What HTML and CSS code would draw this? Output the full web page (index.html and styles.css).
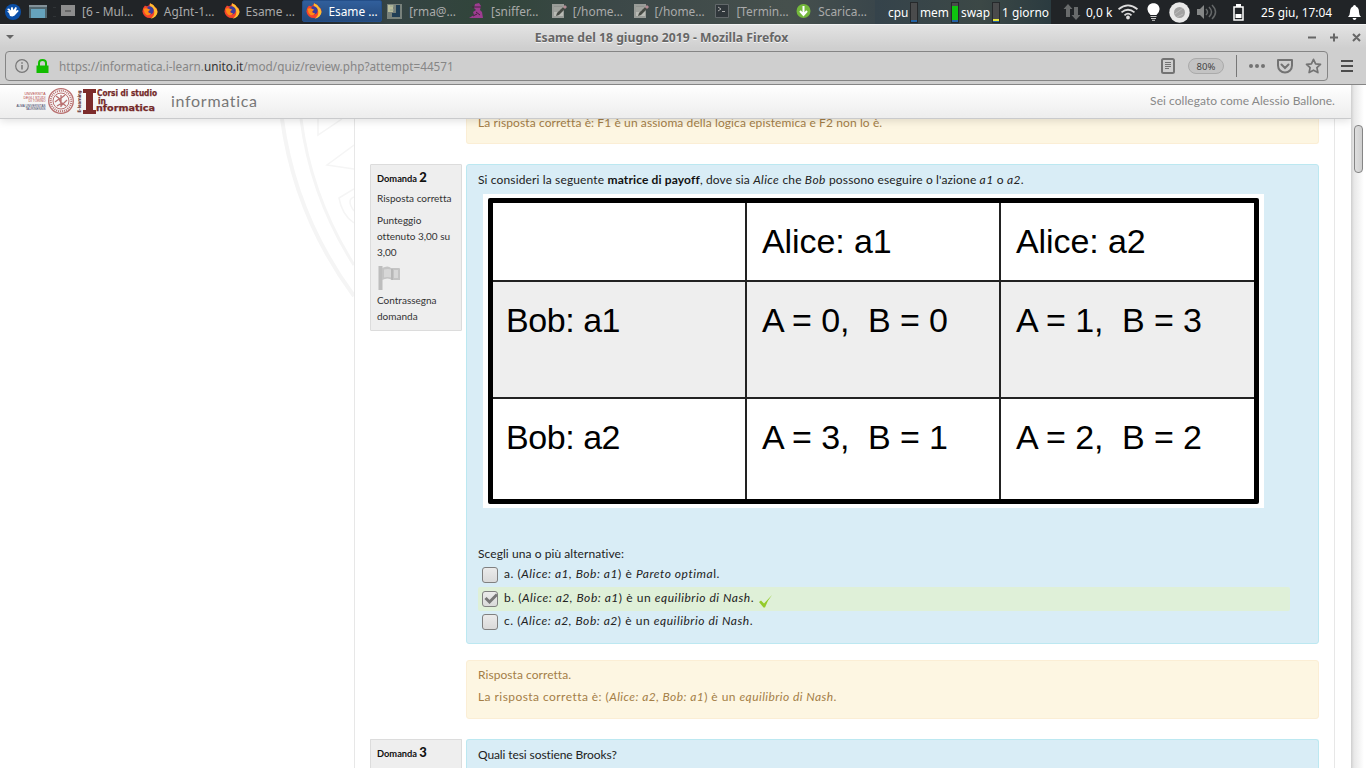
FILE: index.html
```html
<!DOCTYPE html>
<html lang="it">
<head>
<meta charset="utf-8">
<title>Esame del 18 giugno 2019</title>
<link rel="stylesheet" href="styles.css">
</head>
<body>
<svg class="defs" width="0" height="0">
  <defs>
    <symbol id="fox" viewBox="0 0 16 16">
      <path d="M3 2.500Q4 3.500 6 3Q8 2 8 .300Q11.500 1.500 13 4.200Q15.300 5 15.500 8.500A7.600 7.400 0 0 1 .400 8.500Q.300 5 3 2.500z" fill="#f5432b"/>
      <path d="M8 .300Q12 2 13 4.200Q15.500 6 15.500 9A7.600 7 0 0 1 8.500 15.700Q12.500 13 12.300 9Q11.500 5 8.500 3.500Q7.300 2 8 .300z" fill="#ffbd2f"/>
      <path d="M5.500 3.500Q9 2.500 11 5Q12.500 8 10.500 10.500Q7.500 12.500 5 10.500L7.500 9.500Q5.500 8.500 5.500 6.500z" fill="#3b3c9e"/>
      <path d="M1.500 6Q3.500 4.500 6 5.800L8.300 6.800L6.300 8.200Q5.500 10.500 9 10Q8 13 4.500 12Q2 10 1.500 6z" fill="#ff8a16"/>
    </symbol>
    <symbol id="pad" viewBox="0 0 16 16">
      <path d="M1 1h12v14H1z" fill="#999c98"/><path d="M3 4h9v9H3z" fill="#b9bbb5"/><path d="M3 4h8M3 6h7M3 8h5" stroke="#858884"/>
      <path d="M5 13l1-3L12 4l2 2-6 6z" fill="#464a44"/><path d="M12 4l2-2 2 2-2 2z" fill="#b18a91"/>
    </symbol>
  </defs>
</svg>

<header class="panel">
  <div class="launchers">
    <svg width="16" height="16" viewBox="0 0 16 16"><circle cx="8" cy="8" r="8" fill="#0a4fa8"/><path d="M2 5l2-.5 2 2 0-3 1.500-.5 1 3 2-3 1.400.7-1 3 2-.7.8 1-2.700 3Q9 13.500 5 12L4 9 2 7.500 4 7z" fill="#fff"/></svg>
    <svg class="desk" width="20" height="16" viewBox="0 0 20 16"><path d="M1 2h18v12h-3v-3H4v3H1z" fill="#51666e"/><path d="M3 5h14v9H3z" fill="#66a3bd"/><path d="M1 2h18" stroke="#839199" stroke-width="2"/></svg>
    <span class="grip"></span>
  </div>
  <nav class="tasks">
    <span class="task"><svg viewBox="0 0 16 16"><path d="M1 2h14v11H1z" fill="#8d8d8d"/><path d="M5 7h6v2H5z" fill="#666"/></svg>[6 - Mul…</span>
    <span class="task"><svg viewBox="0 0 16 16"><use href="#fox"/></svg>AgInt-1…</span>
    <span class="task"><svg viewBox="0 0 16 16"><use href="#fox"/></svg>Esame …</span>
    <span class="task active"><svg viewBox="0 0 16 16"><use href="#fox"/></svg>Esame …</span>
    <span class="task"><svg viewBox="0 0 16 16"><path d="M0 1h15v15H0z" fill="#78817b"/><path d="M1 2h5v7H1z" fill="#b9bd9c"/><path d="M11 2v10H5" stroke="#203e56" stroke-width="4" fill="none"/><path d="M3 3h4M3 7h4" stroke="#96a38f"/></svg>[rma@…</span>
    <span class="task"><svg viewBox="0 0 16 16"><path d="M6 1l4-1 2 3-1 4 2 2 1 6H0l5-3-1-3 3-2-2-2z" fill="#9c3c90"/><path d="M3 4h9M7 9l4 3M4 13l4-2" stroke="#42233e"/></svg>[sniffer…</span>
    <span class="task"><svg viewBox="0 0 16 16"><use href="#pad"/></svg>[/home…</span>
    <span class="task"><svg viewBox="0 0 16 16"><use href="#pad"/></svg>[/home…</span>
    <span class="task"><svg viewBox="0 0 16 16"><path d="M1.500 1.500h13v13h-13z" fill="#30373b" stroke="#62686a"/><path d="M4 4l3 2-3 2M8 8.500h3" stroke="#aaa" fill="none"/></svg>[Termin…</span>
    <span class="task"><svg viewBox="0 0 16 16"><circle cx="7.500" cy="8" r="7" fill="#74b83b"/><path d="M7.500 3v8M4 8l3.500 4L11 8" stroke="#fff" stroke-width="2" fill="none"/></svg>Scarica…</span>
  </nav>
  <div class="load">
    <span class="w32">cpu</span><i class="meter cpu"></i>
    <span class="w32">mem</span><i class="meter mem"></i>
    <span class="w32">swap</span><i class="meter swap"></i>
    <span class="up">1 giorno</span>
  </div>
  <div class="tray">
    <svg class="net" width="18" height="16" viewBox="0 0 18 16"><path d="M5 0l4.500 5H7v8H3V5H.5zM13 16l-4.500-5H11V3h4v8h2.500z" fill="#686a6b"/></svg>
    <span class="rate">0,0 k</span>
    <svg class="wifi" width="20" height="16" viewBox="0 0 20 16" fill="none" stroke="#ddd" stroke-width="1.800"><path d="M.500 5.200Q10-2.500 19.500 5.200"/><path d="M3.500 8.400Q10 3 16.500 8.400M6.500 11.300Q10 8 13.500 11.300"/><circle cx="10" cy="13.500" r="1" fill="#fff"/></svg>
    <svg class="bulb" width="13" height="18" viewBox="0 0 13 18"><path d="M3.500 12Q0 8.500 .500 5.500C1-1.500 12-1.500 12.500 5.500Q13 8.500 9.500 12z" fill="#fff"/><path d="M3.500 13.500h6M4 15.500h5M5 17.300h3" stroke="#ccc"/></svg>
    <svg class="disc" width="21" height="21" viewBox="0 0 21 21"><circle cx="10.500" cy="10.500" r="10.200" fill="#e9e9e9"/><circle cx="10.500" cy="10.500" r="5.500" fill="#a3a3a3"/><path d="M6 12l8-6M8 15l6-3" stroke="#bbb"/></svg>
    <svg class="snd" width="20" height="16" viewBox="0 0 20 16"><path d="M0 5h3l4-4v14l-4-4H0z" fill="#858787"/><path d="M9 5q3 3 0 6M12 3q5 5 0 10M15 1q7 7 0 14" stroke="#656869" stroke-width="1.500" fill="none"/></svg>
    <svg class="bat" width="11" height="17" viewBox="0 0 11 17"><path d="M1 3h9v13H1z" fill="none" stroke="#fff" stroke-width="1.500"/><path d="M2.500 10h6v4h-6zM3 0h5v3H3z" fill="#fff"/></svg>
    <span class="clock">25 giu, 17:04</span>
    <svg class="bell" width="13" height="15" viewBox="0 0 13 15"><path d="M6.500 0Q8 0 8 1.500Q11 2.500 11 7Q11 10 13 12H0Q2 10 2 7Q2 2.500 5 1.500Q5 0 6.500 0zM4.500 13h4Q8 15 6.500 15T4.500 13z" fill="#fff"/></svg>
  </div>
</header>

<div class="titlebar">
  <svg class="menu" width="8" height="4" viewBox="0 0 8 4"><path d="M0 0h8L4 4z" fill="#666"/></svg>
  <b>Esame del 18 giugno 2019 - Mozilla Firefox</b>
  <svg class="wm" width="53" height="9" viewBox="0 0 53 9" stroke="#666" stroke-width="2" fill="none"><path d="M0 4.500h8M22 4.500h8M26 .500v8M45 1l7 7M52 1l-7 7"/></svg>
</div>

<div class="toolbar">
  <div class="urlbar">
    <svg width="14" height="14" viewBox="0 0 14 14" fill="none" stroke="#777"><circle cx="7" cy="7" r="6.300" stroke-width="1.200"/><path d="M7 6v4.500M7 3.300v1.400" stroke-width="1.500"/></svg>
    <svg class="lock" width="13" height="14" viewBox="0 0 13 14"><path d="M.5 6.500h12V14H.5z" fill="#12bc00"/><path d="M3 7V4Q3 1 6.500 1T10 4v3" fill="none" stroke="#12bc00" stroke-width="2"/></svg>
    <span class="url">https://informatica.i-learn.<em>unito.it</em>/mod/quiz/review.php?attempt=44571</span>
    <svg class="reader" width="14" height="16" viewBox="0 0 14 16" fill="none" stroke="#737373"><rect x="1" y="1" width="12" height="14" rx="1.500" stroke-width="2"/><path d="M4 4.500h6M4 6.500h6M4 8.500h6M4 10.500h4"/></svg>
    <span class="zoom">80%</span>
    <span class="bar"></span>
    <svg class="dots" width="16" height="4" viewBox="0 0 16 4" fill="#737373"><circle cx="2" cy="2" r="2"/><circle cx="8" cy="2" r="2"/><circle cx="14" cy="2" r="2"/></svg>
    <svg class="pocket" width="16" height="15" viewBox="0 0 16 15" fill="none" stroke="#737373" stroke-width="2"><path d="M1 1h14v5.500a7 7 0 0 1-14 0z" stroke-linejoin="round"/><path d="M4.500 5.500L8 9l3.500-3.500" stroke-linecap="round"/></svg>
    <svg class="star" width="17" height="16" viewBox="0 0 17 16"><path d="M8.500 1.300l2.100 4.500 4.900.6-3.600 3.300 1 4.900-4.400-2.400-4.400 2.400 1-4.900-3.600-3.300 4.900-.6z" fill="none" stroke="#737373" stroke-width="1.700" stroke-linejoin="round"/></svg>
  </div>
  <svg class="burger" width="12" height="12" viewBox="0 0 12 12"><path d="M0 1h12M0 6h12M0 11h12" stroke="#4c4c4c" stroke-width="2"/></svg>
</div>

<div class="view">
  <div class="page">
    <div class="navbar">
      <svg class="logo" width="143" height="28" viewBox="0 0 143 28">
        <g class="tiny red" text-anchor="end"><text x="29.500" y="7.500" textLength="21" lengthAdjust="spacingAndGlyphs">UNIVERSITÀ</text><text x="29.500" y="11.500" textLength="22" lengthAdjust="spacingAndGlyphs">DEGLI STUDI</text><text x="29.500" y="15" textLength="17" lengthAdjust="spacingAndGlyphs">DI TORINO</text></g>
        <g class="tiny navy" text-anchor="end"><text x="29.500" y="19.500" textLength="29" lengthAdjust="spacingAndGlyphs">ALMA UNIVERSITAS</text><text x="29.500" y="23" textLength="20" lengthAdjust="spacingAndGlyphs">TAURINENSIS</text></g>
        <g fill="none" stroke="#b97070"><circle cx="45" cy="14" r="12.300" stroke-width="1.300"/><circle cx="45" cy="14" r="10.300" stroke-width="2" stroke-dasharray="1 1"/><circle cx="45" cy="14" r="8" stroke-width="1"/><path d="M40 9l4 3 5-4M39 15l4-3 3 6 5-5M41 19l5-3 4 3M45 8v12" stroke-width="1.300"/></g>
        <text class="side" transform="translate(65 25.500) rotate(-90)" textLength="22" lengthAdjust="spacingAndGlyphs">E-learning</text>
        <path d="M67 2h13v4h-3v17h3v4H67v-4h3V6h-3z" fill="#7c2b2b"/>
        <g class="course"><text x="81" y="9" textLength="60" lengthAdjust="spacingAndGlyphs">Corsi di studio</text><text x="82" y="16.500" textLength="8" lengthAdjust="spacingAndGlyphs">in</text><text x="80" y="24" textLength="59" lengthAdjust="spacingAndGlyphs">nformatica</text></g>
      </svg>
      <span class="brand">informatica</span>
      <span class="login">Sei collegato come Alessio Ballone.</span>
    </div>
    <div class="body">
      <aside class="gutter">
        <svg width="354" height="649" viewBox="0 119 354 649" fill="none" stroke="#f5f5f5">
          <path d="M282 119Q295 216 354 296" stroke-width="4"/><path d="M301 119Q311 197 354 265" stroke-width="3"/>
          <path d="M318 119v16l24-16M354 145l-27 20 27 4M354 189l-15 9q3 17 15 25M354 197q-8 3 0 14" stroke-width="1.500"/>
        </svg>
      </aside>
      <main class="main">
        <div class="feedback cut">La risposta corretta è: F1 è un assioma della logica epistemica e F2 non lo è.</div>

        <section class="question">
          <div class="info">
            <h3>Domanda <b>2</b></h3>
            <p>Risposta corretta</p>
            <p class="grade">Punteggio<br>ottenuto 3,00 su<br>3,00</p>
            <svg class="flag" width="24" height="26" viewBox="0 0 24 26"><path d="M1.500 1h4v24h-4z" fill="#bdbdbd"/><path d="M5 3q6-3 9 0h8q1 0 1 1v11h-8q-4-3-10 0z" fill="#c4c4c4"/><path d="M7 4.500q4-1 7 0v8q-4-1-7 0zM17 5v8h4V5z" fill="#d7d7d7"/><path d="M15 4v11" stroke="#aaa"/></svg>
            <p class="mark">Contrassegna<br>domanda</p>
          </div>
          <div class="content">
            <p class="stem">Si consideri la seguente <b>matrice di payoff</b>, dove sia <i>Alice</i> che <i>Bob</i> possono eseguire o l'azione <i>a1</i> o <i>a2</i>.</p>
            <div class="figure">
              <div class="matrix">
                <span></span><span>Alice: a1</span><span>Alice: a2</span>
                <span class="g">Bob: a1</span><span class="g">A = 0,&nbsp; B = 0</span><span class="g">A = 1,&nbsp; B = 3</span>
                <span>Bob: a2</span><span>A = 3,&nbsp; B = 1</span><span>A = 2,&nbsp; B = 2</span>
              </div>
            </div>
            <p class="prompt">Scegli una o più alternative:</p>
            <div class="answer"><i class="box"></i><span class="text">a. (<i>Alice: a1, Bob: a1</i>) è <i>Pareto optima</i>l.</span></div>
            <div class="answer correct"><span class="box"><svg width="14" height="14" viewBox="0 0 14 14"><path d="M2.500 6l4 4L14 2.500" fill="none" stroke="#777" stroke-width="3"/></svg></span><span class="text">b. (<i>Alice: a2, Bob: a1</i>) è un <i>equilibrio di Nash</i>.</span><svg class="tick" width="13" height="13" viewBox="0 0 13 13"><path d="M0 7l2-1.500 3 3L13 0Q8 6 6 12.500H4.500z" fill="#95cb2b"/></svg></div>
            <div class="answer"><i class="box"></i><span class="text">c. (<i>Alice: a2, Bob: a2</i>) è un <i>equilibrio di Nash</i>.</span></div>
          </div>
        </section>

        <div class="feedback full"><p class="fa">Risposta corretta.</p><p class="fb">La risposta corretta è: (<i>Alice: a2, Bob: a1</i>) è un <i>equilibrio di Nash</i>.</p></div>

        <section class="question next">
          <div class="info"><h3>Domanda <b>3</b></h3></div>
          <div class="content"><p class="stem three">Quali tesi sostiene Brooks?</p></div>
        </section>
      </main>
    </div>
  </div>
  <div class="scroll"><i></i></div>
</div>
</body>
</html>
```
FILE: styles.css
```css
* { box-sizing: border-box; }
body { margin: 0; width: 1366px; height: 768px; overflow: hidden; background: #fff; font-family: "Noto Sans", sans-serif; display: flex; flex-direction: column; }
p, h3 { margin: 0; }
svg { display: block; flex: none; }
.defs { position: absolute; }

/* desktop panel */
.panel { height: 24px; flex: none; display: flex; align-items: center; background: #212427; font-size: 11.900px; color: #fff; line-height: 24px; white-space: nowrap; }
.launchers { width: 57px; padding-left: 5px; display: flex; align-items: center; }
.desk { margin-left: 7px; }
.grip { width: 3px; height: 10px; margin-left: 5px; border: solid #303437; border-width: 1px 0; }
.tasks { display: flex; width: 818px; height: 24px; background: linear-gradient(90deg, transparent 257px, #354344 330px, #31453a 430px, #3c4848 560px, #46504d 730px, #3a464b); }
.task { width: 81.8px; height: 22px; padding-left: 3px; display: flex; align-items: center; gap: 6px; color: #aaa; }
.task svg { width: 16px; height: 16px; }
.task.active { background: linear-gradient(#315f9c, #24497b); border: 1px solid #244e88; color: #fff; width: 80px; margin-right: 1.800px; border-radius: 2px; }
.load { width: 176px; height: 24px; padding-left: 13px; background: linear-gradient(90deg, #35434b, #3c4846 60%, #2b3b40); display: flex; align-items: center; }
.w32 { width: 22px; }
.w32:nth-of-type(n+2) { width: 31px; }
.meter { width: 8px; height: 21px; background: #4a4b4c; border: 1px solid #26292b; margin-right: 2px; }
.cpu { background: linear-gradient(#4a4b4c 17px, #2463a4 17px); }
.mem { background: linear-gradient(#4a4b4c 3px, #0fc40f 3px, #0fc40f 17px, #2463a4 17px); }
.swap { background: linear-gradient(#4a4b4c 16px, #e8e83a 16px, #e8e83a 18px, #2463a4 18px); }
.tray { flex: 1; display: flex; align-items: center; padding-left: 12px; }
.rate { width: 32px; margin-left: 5px; }
.bulb { margin-left: 9px; }
.disc { margin-left: 9px; }
.snd { margin-left: 7px; }
.bat { margin-left: 16px; }
.clock { width: 72px; margin-left: 17px; }
.bell { margin-left: 15px; }

/* browser window */
.titlebar { height: 24px; flex: none; display: grid; grid-template-columns: 31px 1fr 75px; align-items: center; padding: 1px 5px 0 6px; border-top: 1px solid #f3f3f3; background: linear-gradient(#e3e3e3, #cfcfcf); font-size: 12.200px; color: #666; text-align: center; text-shadow: 0 1px #f4f4f4; }
.wm { justify-self: end; }
.toolbar { height: 37px; flex: none; display: flex; align-items: center; padding: 0 0 1px 5px; background: #cfcfcf; border-bottom: 1px solid #858585; }
.urlbar { width: 1323px; height: 30px; padding: 1px 5px 0 9px; border: 1px solid #858585; border-radius: 4px; display: flex; align-items: center; }
.lock { margin-left: 7px; }
.url { flex: 1; margin-left: 10px; font-size: 11.720px; color: #868686; }
.url em { font-style: normal; color: #333; }
.zoom { width: 36px; height: 16px; margin-left: 13px; border: 1px solid #aaa; border-radius: 9px; background: #c3c3c3; text-align: center; font-size: 9.500px; line-height: 15px; color: #444; }
.bar { width: 1px; height: 22px; margin: 0 12px; background: #777; }
.pocket { margin-left: 12px; }
.star { margin-left: 12px; }
.burger { margin-left: 13px; }

.view { flex: 1; min-height: 0; display: flex; }
.page { width: 1351px; display: flex; flex-direction: column; overflow: hidden; font-family: Lato, sans-serif; font-size: 12px; font-variant-ligatures: none; }
.scroll { width: 15px; padding: 40px 0 0 3px; background: linear-gradient(90deg, #cecece, #e8e8e8 3px, #fff 13px); }
.scroll i { display: block; width: 9px; height: 48px; border: 1px solid #858585; border-radius: 4px; background: linear-gradient(90deg, #dedede, #cfcfcf); }

.navbar { height: 34px; flex: none; display: flex; align-items: center; padding: 0 16px 2px 16px; background: linear-gradient(#fff, #ededed); border-bottom: 1px solid #c9cacc; box-shadow: 0 2px 8px rgba(0,0,0,.12); position: relative; z-index: 2; }
.logo { overflow: visible; }
.tiny { font: 3.800px "Liberation Sans", sans-serif; }
.red { fill: #b33c3c; }
.navy { fill: #36365c; }
.side { font: bold 4.800px "DejaVu Sans", sans-serif; fill: #5d2929; }
.course { font: bold 8px "DejaVu Sans", sans-serif; fill: #742929; stroke: #742929; stroke-width: .25px; }
.brand { margin-left: 12px; font-size: 16px; letter-spacing: .7px; color: #777; flex: 1; }
.login { color: #888; letter-spacing: .05px; }

.body { flex: 1; min-height: 0; display: flex; }
.gutter { width: 354px; flex: none; }
.main { width: 981px; padding: 0 15px; border: solid #e7e7e7; border-width: 0 1px; }
.feedback { width: 853px; margin-left: 96px; padding-left: 11px; border: 1px solid #fbeed5; border-radius: 3px; background: #fdf6e2; color: #a47e47; }
.cut { height: 25px; border-top: 0; border-radius: 0 0 3px 3px; line-height: 8px; letter-spacing: .1px; }
.full { height: 59px; margin-top: 16px; padding-top: 3px; line-height: 22px; }
.fa { letter-spacing: .05px; }
.fb { letter-spacing: .44px; }
.question { display: flex; gap: 4px; margin-top: 20px; align-items: flex-start; }
.info { width: 92px; height: 167px; padding: 4px 0 0 6px; background: #eee; border: 1px solid #dcdcdc; border-radius: 1px; font-size: 10px; line-height: 16px; color: #333; white-space: nowrap; }
.info h3 { font-size: 9.300px; line-height: 16px; height: 17px; color: #111; margin-bottom: 4px; }
.info h3 b { font-size: 13px; }
.grade { margin-top: 6px; }
.flag { margin-top: 5px; }
.mark { margin-top: 1px; }
.content { width: 853px; height: 480px; padding: 4px 28px 0 11px; background: #d9edf6; border: 1px solid #bce8f1; border-radius: 3px; color: #222; white-space: nowrap; }
.stem { height: 25px; line-height: 22px; letter-spacing: .14px; }
.stem i { letter-spacing: .4px; }
.stem b { color: #111; }
.three { letter-spacing: -.1px; }
.figure { width: 781px; height: 314px; margin-left: 5px; padding: 4px 5px; background: #fff; }
.matrix { width: 771px; height: 306px; display: grid; grid-template-columns: 254px 254px 1fr; grid-template-rows: 79px 117px 1fr; border: 5px solid #000; border-radius: 2px; font: 34px/40px "Liberation Sans", Arial, sans-serif; letter-spacing: -.1px; color: #000; }
.matrix span { padding: 18px 0 0 15px; border: solid #222; border-width: 0 2px 2px 0; }
.matrix span:nth-child(3n+1) { padding-left: 13px; letter-spacing: -.45px; }
.matrix span:nth-child(3n) { border-right: 0; }
.matrix span:nth-child(n+7) { border-bottom: 0; }
.matrix .g { background: #eee; }
.prompt { height: 21px; margin-top: 35px; line-height: 22px; letter-spacing: .07px; }
.answer { height: 23px; padding: 0 0 1px 4px; display: flex; align-items: center; line-height: 20px; letter-spacing: .54px; }
.answer.correct { height: 24px; background: #dff0d8; border-radius: 2px; }
.text { padding-bottom: 2px; }
.box { width: 16px; height: 16px; margin-right: 6px; border: 1px solid #808080; border-radius: 3px; background: linear-gradient(#ebebeb, #dadada); flex: none; }
.tick { margin: 5px 0 0 5px; }
.next .info, .next .content { height: 60px; border-bottom: 0; }
```
